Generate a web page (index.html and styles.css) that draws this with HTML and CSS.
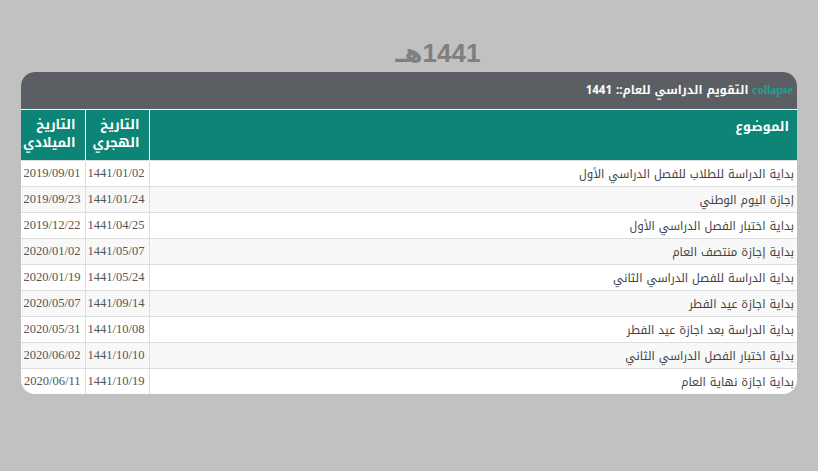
FILE: index.html
```html
<!DOCTYPE html>
<html lang="ar" dir="rtl">
<head>
<meta charset="utf-8">
<link rel="stylesheet" href="styles.css">
</head>
<body>
<h1 class="year">1441هـ</h1>
<div class="card">
  <div class="card-head"><span class="collapse">collapse</span> التقويم الدراسي للعام:: 1441</div>
  <table class="cal">
    <colgroup><col><col class="col-date"><col class="col-date"></colgroup>
    <thead>
      <tr><th class="c-topic">الموضوع</th><th class="c-date">التاريخ<br>الهجري</th><th class="c-date">التاريخ<br>الميلادي</th></tr>
    </thead>
    <tbody>
      <tr><td>بداية الدراسة للطلاب للفصل الدراسي الأول</td><td class="d">1441/01/02</td><td class="d">2019/09/01</td></tr>
      <tr><td>إجازة اليوم الوطني</td><td class="d">1441/01/24</td><td class="d">2019/09/23</td></tr>
      <tr><td>بداية اختبار الفصل الدراسي الأول</td><td class="d">1441/04/25</td><td class="d">2019/12/22</td></tr>
      <tr><td>بداية إجازة منتصف العام</td><td class="d">1441/05/07</td><td class="d">2020/01/02</td></tr>
      <tr><td>بداية الدراسة للفصل الدراسي الثاني</td><td class="d">1441/05/24</td><td class="d">2020/01/19</td></tr>
      <tr><td>بداية اجازة عيد الفطر</td><td class="d">1441/09/14</td><td class="d">2020/05/07</td></tr>
      <tr><td>بداية الدراسة بعد اجازة عيد الفطر</td><td class="d">1441/10/08</td><td class="d">2020/05/31</td></tr>
      <tr><td>بداية اختبار الفصل الدراسي الثاني</td><td class="d">1441/10/10</td><td class="d">2020/06/02</td></tr>
      <tr><td>بداية اجازة نهاية العام</td><td class="d">1441/10/19</td><td class="d">2020/06/11</td></tr>
    </tbody>
  </table>
</div>
</body>
</html>
```

FILE: styles.css
```css
html, body {
  margin: 0;
  padding: 0;
  background: #c1c1c1;
}
body {
  font-family: "Noto Kufi Arabic", "Noto Sans Arabic", "Droid Arabic Kufi", "DejaVu Sans", sans-serif;
  padding-top: 39px;
}
.year {
  margin: 0 0 4px 0;
  padding-left: 58px;
  text-align: center;
  font-family: "Liberation Sans", "DejaVu Sans", sans-serif;
  font-size: 26px;
  line-height: 29px;
  font-weight: bold;
  color: #7f7f7f;
}
.card {
  width: 776px;
  margin: 0 auto;
  border-radius: 14px;
  overflow: hidden;
  background: #fff;
}
.card-head {
  background: #5b5e63;
  color: #fff;
  font-weight: bold;
  font-size: 11.5px;
  line-height: 37px;
  height: 37px;
  padding-right: 4px;
  border-bottom: 1px solid #fff;
}
.collapse {
  color: #16a697;
  font-family: "Liberation Serif", serif;
  font-size: 12px;
}
.cal {
  width: 100%;
  border-collapse: collapse;
  table-layout: fixed;
}
.col-date { width: 64px; }
.cal th {
  background: #0d8576;
  color: #fff;
  font-size: 13px;
  font-weight: bold;
  line-height: 18px;
  text-align: right;
  vertical-align: top;
  padding: 6px 9px 8px 4px;
  height: 36px;
  border-left: 1px solid #fff;
}
.cal th.c-topic { padding: 8px 8px 6px 4px; }
.cal th:last-child { border-left: none; }
.cal td {
  font-size: 11.5px;
  color: #444;
  height: 25px;
  padding: 0 3px 0 4px;
  text-align: right;
  border-top: 1px solid #ddd;
  border-left: 1px solid #ddd;
  white-space: nowrap;
}
.cal td:last-child { border-left: none; }
.cal td.d {
  font-family: "Liberation Serif", serif;
  font-size: 12.5px;
  color: #555;
  padding: 0 4px;
}
.cal tbody tr:nth-child(even) td { background: #f8f8f8; }
```
